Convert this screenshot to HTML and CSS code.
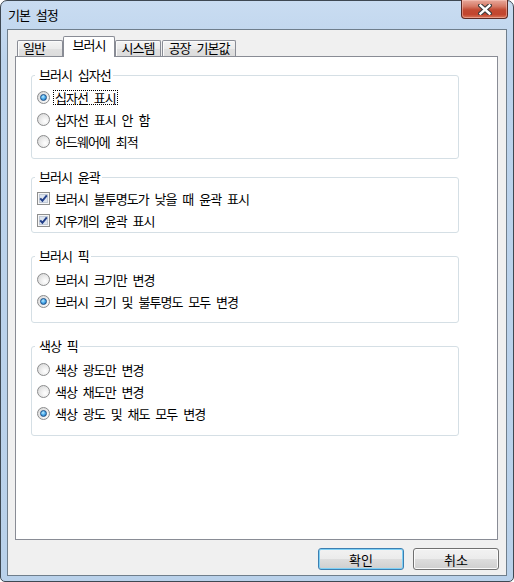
FILE: index.html
```html
<!DOCTYPE html>
<html>
<head>
	<meta charset="utf-8">
	<title>기본 설정</title>
	<link rel="stylesheet" href="styles.css">
</head>
<body>
	<div class="window">
		<div class="titlebar">
			<span class="title">기본 설정</span>
			<div class="close">
				<svg width="14" height="11" viewBox="0 0 14 11">
					<path d="M2.5 1.5 L11.5 9.5 M11.5 1.5 L2.5 9.5" stroke="#3a3a3a" stroke-width="4.6" stroke-linecap="square"/>
					<path d="M2.5 1.5 L11.5 9.5 M11.5 1.5 L2.5 9.5" stroke="#ffffff" stroke-width="2.4" stroke-linecap="square"/>
				</svg>
			</div>
		</div>

		<div class="client">
			<div class="tabs">
				<div class="tab first">일반</div>
				<div class="tab active">브러시</div>
				<div class="tab third">시스템</div>
				<div class="tab fourth">공장 기본값</div>
			</div>

			<div class="panel">
				<fieldset class="group g1">
					<legend>브러시 십자선</legend>
					<div class="row"><span class="radio on"></span><span class="label focus">십자선 표시</span></div>
					<div class="row"><span class="radio"></span><span class="label">십자선 표시 안 함</span></div>
					<div class="row"><span class="radio"></span><span class="label">하드웨어에 최적</span></div>
				</fieldset>

				<fieldset class="group g2">
					<legend>브러시 윤곽</legend>
					<div class="row">
						<svg class="check" width="13" height="13" viewBox="0 0 13 13">
							<rect x="0.5" y="0.5" width="12" height="12" fill="#f6f6f6" stroke="#8e8f8f"/>
							<rect x="2.5" y="2.5" width="8" height="8" fill="#dde4ee" stroke="#c0c9d6"/>
							<path d="M3.2 6.4 L5.4 8.8 L9.8 3.4" fill="none" stroke="#23408a" stroke-width="2"/>
						</svg>
						<span class="label">브러시 불투명도가 낮을 때 윤곽 표시</span>
					</div>
					<div class="row">
						<svg class="check" width="13" height="13" viewBox="0 0 13 13">
							<rect x="0.5" y="0.5" width="12" height="12" fill="#f6f6f6" stroke="#8e8f8f"/>
							<rect x="2.5" y="2.5" width="8" height="8" fill="#dde4ee" stroke="#c0c9d6"/>
							<path d="M3.2 6.4 L5.4 8.8 L9.8 3.4" fill="none" stroke="#23408a" stroke-width="2"/>
						</svg>
						<span class="label">지우개의 윤곽 표시</span>
					</div>
				</fieldset>

				<fieldset class="group g3">
					<legend>브러시 픽</legend>
					<div class="row"><span class="radio"></span><span class="label">브러시 크기만 변경</span></div>
					<div class="row"><span class="radio on"></span><span class="label">브러시 크기 및 불투명도 모두 변경</span></div>
				</fieldset>

				<fieldset class="group g4">
					<legend>색상 픽</legend>
					<div class="row"><span class="radio"></span><span class="label">색상 광도만 변경</span></div>
					<div class="row"><span class="radio"></span><span class="label">색상 채도만 변경</span></div>
					<div class="row"><span class="radio on"></span><span class="label">색상 광도 및 채도 모두 변경</span></div>
				</fieldset>
			</div>

			<div class="buttons">
				<button class="btn default">확인</button>
				<button class="btn">취소</button>
			</div>
		</div>
	</div>
</body>
</html>
```

FILE: styles.css
```css
body {
	margin: 0;
	background-color: #ffffff;
	font: 13px "Noto Sans CJK KR", "Noto Sans", sans-serif;
	letter-spacing: -1px;
	word-spacing: 4px;
	color: #000000;
}
.window {
	width: 514px;
	height: 582px;
	box-sizing: border-box;
	border: 1px solid #3e4852;
	border-radius: 7px 7px 5px 5px;
	padding: 0 6px 5px 6px;
	background: linear-gradient(to bottom, #c9dcf1 0, #bcd3ec 60px, #b9d1ea 100%);
	display: flex;
	flex-direction: column;
}
.titlebar {
	height: 28px;
	display: flex;
	align-items: center;
}
.title {
	padding-left: 1px;
	line-height: 14px;
}
.close {
	margin: -1px -1px 0 auto;
	align-self: flex-start;
	width: 47px;
	height: 19px;
	box-sizing: border-box;
	border: 1px solid #5c2a24;
	border-top: none;
	border-radius: 0 0 4px 4px;
	background: linear-gradient(to bottom, #e8a99c 0, #d67a66 35%, #c24a33 55%, #c2452e 80%, #d8765a 100%);
	box-shadow: inset 0 0 0 1px rgba(255, 210, 200, 0.45);
	display: flex;
	align-items: center;
	justify-content: center;
}
.client {
	flex: 1;
	border: 1px solid #6f7e8c;
	background-color: #f0f0f0;
	padding: 6px 7px 5px 7px;
	display: flex;
	flex-direction: column;
}
.tabs {
	height: 20px;
	display: flex;
	align-items: flex-end;
	padding-left: 2px;
}
.tab {
	box-sizing: border-box;
	height: 16px;
	border: 1px solid #898c95;
	border-bottom: none;
	border-radius: 2px 2px 0 0;
	background: linear-gradient(to bottom, #f4f4f4 0, #ebebeb 50%, #e1e1e1 51%, #dcdcdc 100%);
	box-shadow: inset 1px 1px 0 #fbfbfb;
	line-height: 14px;
	text-align: center;
}
.tab.first {
	width: 46px;
	text-align: left;
	padding-left: 5px;
}
.tab.active {
	width: 52px;
	height: 21px;
	margin-bottom: -1px;
	padding-top: 1px;
	background: #ffffff;
	box-shadow: none;
	position: relative;
	z-index: 1;
}
.tab.third {
	width: 46px;
}
.tab.fourth {
	width: 74px;
	margin-left: 1px;
}
.panel {
	flex: 1;
	margin-right: 1px;
	border: 1px solid #898c95;
	background-color: #ffffff;
	padding: 11px 0 0 15px;
}
.group {
	width: 428px;
	box-sizing: border-box;
	margin: 0;
	border: 1px solid #d5dfe5;
	border-radius: 3px;
	padding: 4px 0 0 5px;
	min-width: 0;
}
.group legend {
	margin-left: -2px;
	padding: 0 2px 0 4px;
	line-height: 14px;
}
.g1 {
	padding-bottom: 6px;
}
.g2 {
	margin-top: 11px;
	padding-top: 3px;
	padding-bottom: 1px;
}
.g3 {
	margin-top: 16px;
	padding-top: 5px;
	padding-bottom: 10px;
}
.g4 {
	margin-top: 16px;
	padding-top: 5px;
	padding-bottom: 11px;
}
.row {
	height: 22px;
	display: flex;
	align-items: center;
}
.radio {
	width: 13px;
	height: 13px;
	box-sizing: border-box;
	border-radius: 50%;
	border: 1px solid #8b8c8d;
	background: radial-gradient(circle at 65% 65%, #ffffff 0, #eeeeee 40%, #d2d2d2 100%);
	margin-right: 4px;
	flex: none;
	padding: 2px;
}
.radio.on::after {
	content: "";
	display: block;
	width: 7px;
	height: 7px;
	box-sizing: border-box;
	border-radius: 50%;
	border: 1px solid #1d4f86;
	background: radial-gradient(circle at 40% 35%, #bfeaff 0, #4fb0ee 45%, #1a63b0 100%);
}
.check {
	flex: none;
	margin-right: 4px;
}
.label {
	padding: 0 1px;
	line-height: 13px;
}
.label.focus {
	outline: 1px dotted #000000;
}
.buttons {
	margin-top: 8px;
	display: flex;
	justify-content: flex-end;
	gap: 9px;
}
.btn {
	width: 86px;
	height: 22px;
	margin: 0;
	padding: 0;
	border: 1px solid #707070;
	border-radius: 3px;
	background: linear-gradient(to bottom, #f2f2f2 0, #ebebeb 50%, #dddddd 51%, #cfcfcf 100%);
	box-shadow: inset 0 0 0 1px #fbfbfb;
	font: inherit;
	color: #000000;
}
.btn.default {
	border-color: #3c7fb1;
	box-shadow: inset 0 0 0 1px #7fd0f5;
}
```
